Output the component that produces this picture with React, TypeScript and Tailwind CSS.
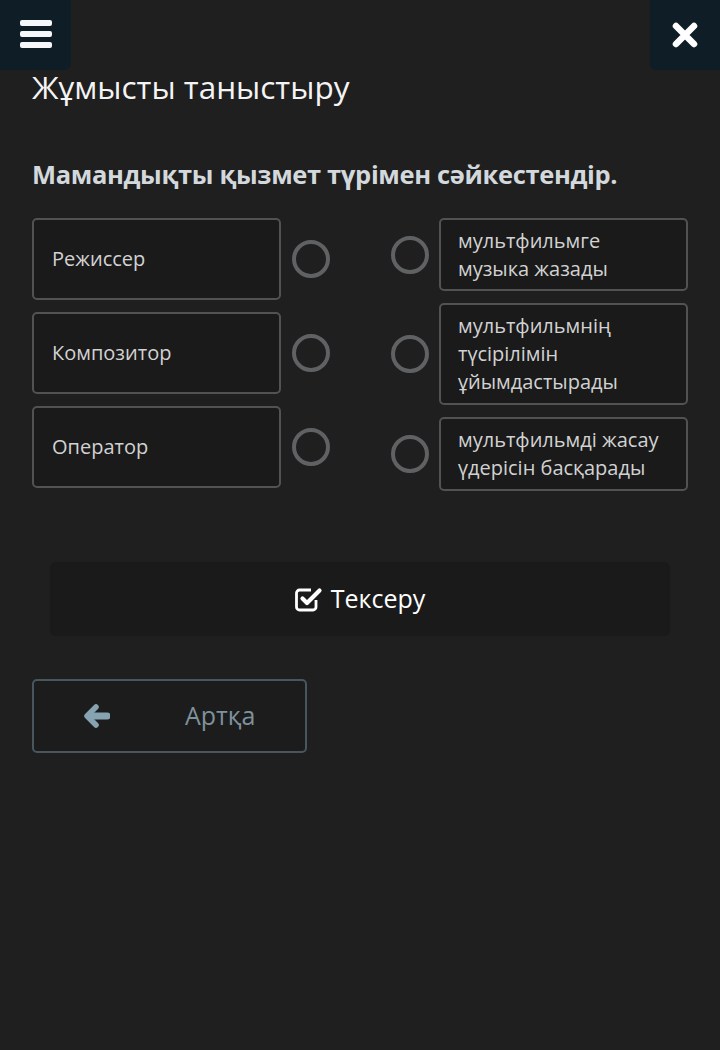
import React from "react";

// ─── data ─────────────────────────────────────────────────────────────────────
const LEFT = ["Режиссер", "Композитор", "Оператор"];
const RIGHT = [
  { text: ["мультфильмге", "музыка жазады"], h: "h-[73px]" },
  { text: ["мультфильмнің", "түсірілімін", "ұйымдастырады"], h: "h-[102px]" },
  { text: ["мультфильмді жасау", "үдерісін басқарады"], h: "h-[74px]" },
];

const font = { fontFamily: '"Open Sans", "Noto Sans", sans-serif' };

// ─── icons ────────────────────────────────────────────────────────────────────
function Burger() {
  return (
    <svg width="34" height="30" viewBox="0 0 34 30">
      <rect x="1" y="0" width="32" height="6" rx="2" fill="#f5f7f8" />
      <rect x="1" y="11" width="32" height="6" rx="2" fill="#f5f7f8" />
      <rect x="1" y="22" width="32" height="6" rx="2" fill="#f5f7f8" />
    </svg>
  );
}

function CloseX() {
  return (
    <svg width="28" height="28" viewBox="0 0 28 28">
      <path d="M5 5 L23 23 M23 5 L5 23" stroke="#fff" strokeWidth="6.5" strokeLinecap="round" />
    </svg>
  );
}

function CheckSquare() {
  return (
    <svg width="28" height="26" viewBox="0 0 28 26">
      <path
        d="M21 14 V21 a3 3 0 0 1 -3 3 H4.5 a3 3 0 0 1 -3 -3 V7 a3 3 0 0 1 3 -3 H16"
        fill="none"
        stroke="#fff"
        strokeWidth="2.8"
      />
      <path d="M7.5 12.5 L12 17 L24.5 4.5" fill="none" stroke="#fff" strokeWidth="4.2" strokeLinecap="round" strokeLinejoin="round" />
    </svg>
  );
}

function ArrowLeft() {
  return (
    <svg width="26" height="24" viewBox="0 0 26 24">
      <path d="M12 3 L3 12 L12 21" fill="none" stroke="#86a3b2" strokeWidth="5.5" strokeLinecap="round" strokeLinejoin="round" />
      <path d="M5 12 H23" stroke="#86a3b2" strokeWidth="7" strokeLinecap="round" />
    </svg>
  );
}

function Ring() {
  return <span className="block h-[38px] w-[38px] shrink-0 rounded-full border-[4px] border-[#5f6163]" />;
}

// ─── page ─────────────────────────────────────────────────────────────────────
export default function App() {
  return (
    <div className="min-h-[1050px] w-[720px] bg-[#1f1f1f]" style={font}>
      {/* top bar */}
      <div className="flex items-start justify-between">
        <div className="flex h-[70px] w-[71px] items-center justify-center rounded-br-md bg-[#0f1e26]">
          <Burger />
        </div>
        <div className="flex h-[70px] w-[70px] items-center justify-center rounded-bl-md bg-[#0f1e26]">
          <CloseX />
        </div>
      </div>

      <div className="px-8">
        <h1 className="-mt-[3px] text-[31.5px] leading-[40px] text-[#f4f4f4]">Жұмысты таныстыру</h1>

        <p className="mt-[51px] text-[25.5px] font-bold leading-[32px] tracking-[-0.35px] text-[#d3d8dc]">
          Мамандықты қызмет түрімен сәйкестендір.
        </p>

        {/* matching */}
        <div className="mt-[28px] flex">
          <div className="flex w-[249px] flex-col gap-3">
            {LEFT.map((t) => (
              <div key={t} className="flex h-[82px] items-center">
                <div className="flex h-full w-[249px] items-center rounded-[5px] border-2 border-[#505254] bg-[#1a1a1a] pl-[18px] text-[20px] text-[#d2d2d2]">
                  {t}
                </div>
              </div>
            ))}
          </div>
          <div className="ml-[11px] flex flex-col gap-3">
            {LEFT.map((t) => (
              <div key={t} className="flex h-[82px] items-center">
                <Ring />
              </div>
            ))}
          </div>
          <div className="ml-[61px] flex flex-col gap-3">
            {RIGHT.map((r, i) => (
              <div key={i} className={`flex ${r.h} items-center`}>
                <Ring />
              </div>
            ))}
          </div>
          <div className="ml-[10px] flex w-[249px] flex-col gap-3">
            {RIGHT.map((r, i) => (
              <div
                key={i}
                className={`flex ${r.h} flex-col justify-center rounded-[5px] border-2 border-[#505254] bg-[#1a1a1a] pl-[17px] text-[20px] leading-[28px] text-[#d2d2d2]`}
              >
                {r.text.map((l) => (
                  <span key={l}>{l}</span>
                ))}
              </div>
            ))}
          </div>
        </div>

        {/* check */}
        <div className="mx-[18px] mt-[71px] flex h-[74px] items-center justify-center gap-[8px] rounded-md bg-[#1a1a1a]">
          <CheckSquare />
          <span className="text-[25px] text-white">Тексеру</span>
        </div>

        {/* back */}
        <div className="mt-[43px] flex h-[74px] w-[275px] items-center rounded-[5px] border-2 border-[#48565e] bg-[#1c1c1c]">
          <span className="ml-[50px]">
            <ArrowLeft />
          </span>
          <span className="ml-[75px] text-[25px] text-[#7e929c]">Артқа</span>
        </div>
      </div>
    </div>
  );
}
